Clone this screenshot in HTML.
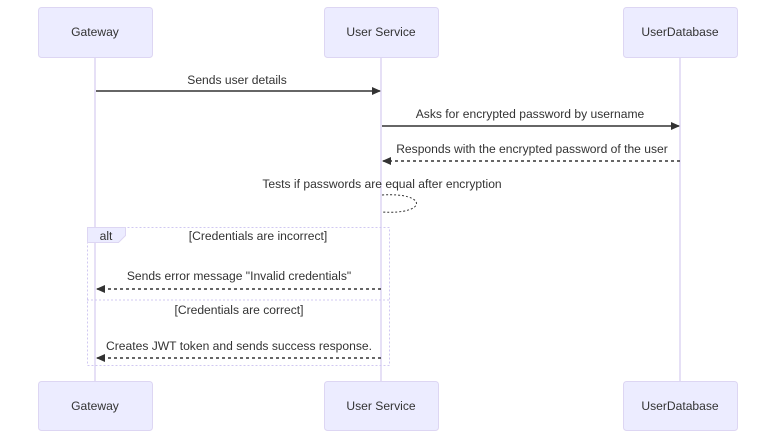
<!DOCTYPE html>
<html><head><style>body{margin:0;background:#fff}svg{display:block}text{font-family:"Liberation Sans",sans-serif;font-size:12.1px;fill:#333}</style></head><body>
<svg width="784" height="444" viewBox="0 0 784 444">
<defs><marker id="a" markerWidth="9" markerHeight="9" refX="8" refY="4" orient="auto" markerUnits="userSpaceOnUse"><path d="M0,0L9,4L0,8z" fill="#333"/></marker></defs>
<g stroke="#ddd6f3" stroke-width="1.5"><line x1="95" y1="57" x2="95" y2="381"/><line x1="381" y1="57" x2="381" y2="381"/><line x1="680" y1="57" x2="680" y2="381"/></g>
<g fill="#ECECFF" stroke="#ddd6f3">
<rect x="38.5" y="7.5" width="114" height="50" rx="3"/><rect x="324.5" y="7.5" width="114" height="50" rx="3"/><rect x="623.5" y="7.5" width="114" height="50" rx="3"/>
<rect x="38.5" y="381.5" width="114" height="49" rx="3"/><rect x="324.5" y="381.5" width="114" height="49" rx="3"/><rect x="623.5" y="381.5" width="114" height="49" rx="3"/>
</g>
<g text-anchor="middle">
<text x="95" y="36">Gateway</text><text x="381" y="36">User Service</text><text x="680" y="36">UserDatabase</text>
<text x="95" y="410">Gateway</text><text x="381" y="410">User Service</text><text x="680" y="410">UserDatabase</text>
<text x="237" y="84">Sends user details</text>
<text x="530" y="118">Asks for encrypted password by username</text>
<text x="532" y="153">Responds with the encrypted password of the user</text>
<text x="382" y="188">Tests if passwords are equal after encryption</text>
<text x="258" y="240">[Credentials are incorrect]</text>
<text x="239" y="280">Sends error message "Invalid credentials"</text>
<text x="239" y="314">[Credentials are correct]</text>
<text x="239" y="350">Creates JWT token and sends success response.</text>
</g>
<g stroke="#333" stroke-width="1.5" fill="none">
<line x1="96" y1="91" x2="380" y2="91" marker-end="url(#a)"/>
<line x1="382" y1="126" x2="679" y2="126" marker-end="url(#a)"/>
<line x1="680" y1="161" x2="383" y2="161" stroke-dasharray="3,3" marker-end="url(#a)"/>
<path d="M382,195 C428,192 428,215 382,212" stroke-width="1" stroke-dasharray="2,2"/>
<line x1="381" y1="289" x2="97" y2="289" stroke-dasharray="3,3" marker-end="url(#a)"/>
<line x1="381" y1="358" x2="97" y2="358" stroke-dasharray="3,3" marker-end="url(#a)"/>
</g>
<g stroke="#d0c8f2" stroke-dasharray="2,2" fill="none">
<rect x="87.5" y="227.5" width="302" height="138"/>
<line x1="87" y1="300" x2="390" y2="300"/>
</g>
<path d="M87.5,227.5H125.5V235.5L118.5,242.5H87.5Z" fill="#ECECFF" stroke="#ddd6f3"/>
<text x="106" y="240" text-anchor="middle">alt</text>
</svg>
</body></html>
